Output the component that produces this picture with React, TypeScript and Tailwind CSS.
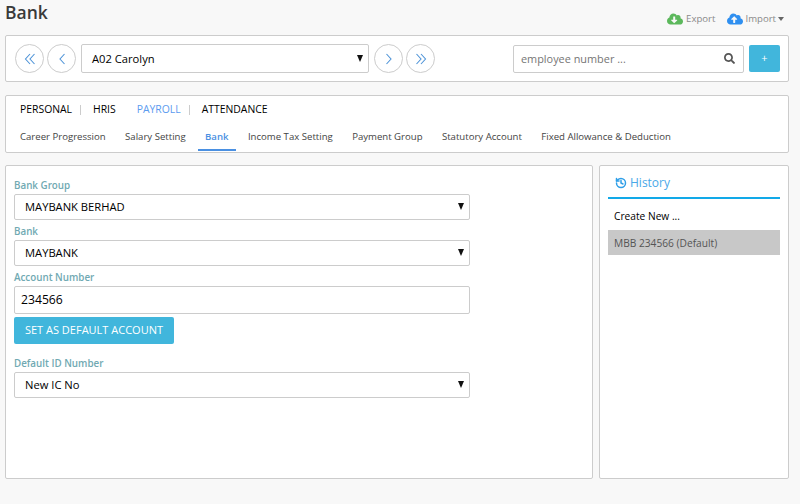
import React from 'react';
import { History } from 'lucide-react';
import { FaCloudDownloadAlt, FaCloudUploadAlt, FaSearch } from 'react-icons/fa';

const font = { fontFamily: '"Open Sans", "Noto Sans", sans-serif' };

function CircleBtn({ d }: { d: string }) {
  return <button className="w-[29px] h-[29px] shrink-0 rounded-full bg-white border border-[#cccccc] flex items-center justify-center text-[#4f94d8]">
      <svg width="12" height="12" viewBox="0 0 12 12" fill="none" stroke="currentColor" strokeWidth="1.1"><path d={d} /></svg>
    </button>;
}

function Select({ value, className }: { value: string; className: string }) {
  return <div className={`bg-white border border-[#cccccc] rounded-[2px] flex items-center justify-between pl-[10px] pr-[5px] text-[11.2px] text-black ${className}`}>
      <span className="pt-[1px]">{value}</span>
      <svg width="6" height="7" viewBox="0 0 6 7" className="mb-[1px]"><path d="M0 0h6L3 7z" fill="#111" /></svg>
    </div>;
}

function Label({ children }: { children: React.ReactNode }) {
  return <div className="text-[9.8px] leading-[12px] font-semibold text-[#70a9b2]">{children}</div>;
}

export default function App() {
  const tabs = ['PERSONAL', 'HRIS', 'PAYROLL', 'ATTENDANCE'];
  const subTabs = ['Career Progression', 'Salary Setting', 'Bank', 'Income Tax Setting', 'Payment Group', 'Statutory Account', 'Fixed Allowance & Deduction'];
  return <div style={font} className="w-[800px] h-[504px] overflow-hidden bg-[#f8f8f8] pl-[5px] pr-[11px]">
      <div className="h-[35px] flex items-start justify-between">
        <h1 className="text-[17.5px] leading-[24px] font-semibold text-[#3a3a3a]">Bank</h1>
        <div className="flex items-center pt-[11px] text-[9.6px] leading-[14px] text-[#8a8a8a]">
          <FaCloudDownloadAlt size={16} className="text-[#5cb85c] mr-[3px]" />
          <span>Export</span>
          <FaCloudUploadAlt size={16} className="text-[#2f8ff0] ml-[12px] mr-[2px]" />
          <span>Import</span>
          <svg width="6" height="4" viewBox="0 0 6 4" className="ml-[2px] mr-[5px]"><path d="M0 0h6L3 4z" fill="#666" /></svg>
        </div>
      </div>

      <div className="h-[47px] bg-white border border-[#cccccc] rounded-[2px] flex items-center pl-[9px] pr-[8px]">
        <div className="flex gap-[3px]">
          <CircleBtn d="M6 1 1.5 6 6 11M10.5 1 6 6l4.5 5" />
          <CircleBtn d="M8.5 1 4 6l4.5 5" />
        </div>
        <Select value="A02 Carolyn" className="w-[288px] h-[29px] ml-[5px]" />
        <div className="flex gap-[3px] ml-[5px]">
          <CircleBtn d="M3.5 1 8 6l-4.5 5" />
          <CircleBtn d="M1.5 1 6 6l-4.5 5M6 1l4.5 5L6 11" />
        </div>
        <div className="ml-[78px] w-[231px] h-[28px] border border-[#cccccc] rounded-[2px] flex items-center justify-between pl-[7px] pr-[8px] text-[10.9px] text-[#757575]">
          <span className="pt-[2px]">employee number ...</span>
          <FaSearch size={11} className="text-[#555555]" />
        </div>
        <button className="ml-[5px] w-[31px] h-[27px] bg-[#41b6dc] rounded-[2px] text-white text-[11px]">+</button>
      </div>

      <div className="mt-[13px] h-[58px] bg-white border border-[#cccccc] rounded-[2px] pl-[14px]">
        <div className="flex items-center h-[26px] mt-[1px] text-[10.4px] text-black">
          {tabs.map((t, i) => <React.Fragment key={t}>
              <span className={t === 'PAYROLL' ? 'text-[#5b9bef]' : ''}>{t}</span>
              {i !== 3 && <span className={`w-px h-[10px] ml-[8px] mr-[12px] ${i === 1 ? 'bg-transparent' : 'bg-[#cccccc]'}`} />}
            </React.Fragment>)}
        </div>
        <div className="flex gap-[5.4px] h-[28px] text-[9.6px] text-[#444444]">
          {subTabs.map(t => <span key={t} className={`px-[7px] first:pl-0 flex items-center pt-[2px] border-b-2 ${t === 'Bank' ? 'border-[#4a90e2] text-[#4a90e2] font-semibold' : 'border-transparent'}`}>{t}</span>)}
        </div>
      </div>

      <div className="mt-[12px] flex gap-[6px]">
        <div className="w-[588px] h-[314px] bg-white border border-[#cccccc] rounded-[2px] pl-[8px] pt-[14px]">
          <Label>Bank Group</Label>
          <Select value="MAYBANK BERHAD" className="w-[456px] h-[26px] mt-[2px]" />
          <div className="mt-[6px]"><Label>Bank</Label></div>
          <Select value="MAYBANK" className="w-[456px] h-[26px] mt-[2px]" />
          <div className="mt-[6px]"><Label>Account Number</Label></div>
          <div className="w-[456px] h-[28px] mt-[2px] border border-[#cccccc] rounded-[2px] flex items-center pl-[6px] text-[12.2px] text-black">234566</div>
          <button className="mt-[3px] block w-[160px] h-[27px] bg-[#41b6dc] rounded-[2px] text-white text-[11px]">SET AS DEFAULT ACCOUNT</button>
          <div className="mt-[14px]"><Label>Default ID Number</Label></div>
          <Select value="New IC No" className="w-[456px] h-[26px] mt-[2px]" />
        </div>
        <div className="w-[190px] h-[314px] bg-white border border-[#cccccc] rounded-[2px] px-[8px]">
          <div className="h-[33px] border-b-2 border-[#12a9e8] flex items-center pl-[7px] pt-[2px] gap-[3px] text-[12px] text-[#4aa8e8]">
            <History size={12} strokeWidth={3} className="text-[#2f9fe8]" />History
          </div>
          <div className="h-[31px] flex items-center pl-[6px] pt-[4px] text-[10.2px] text-black">Create New ...</div>
          <div className="h-[25px] flex items-center pl-[6px] pt-[3px] bg-[#c8c8c8] text-[10.2px] text-[#555555]">MBB 234566 (Default)</div>
        </div>
      </div>
    </div>;
}
